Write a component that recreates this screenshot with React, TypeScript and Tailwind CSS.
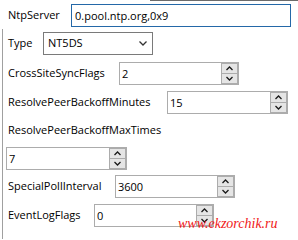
const Chevron = ({ up }: { up?: boolean }) => (
  <svg width="7" height="5" viewBox="0 0 7 5" className="block">
    <polyline
      points={up ? '0.5,4 3.5,1 6.5,4' : '0.5,1 3.5,4 6.5,1'}
      fill="none"
      stroke="#1a1a1a"
      strokeWidth="1.3"
    />
  </svg>
);

const Spinner = () => (
  <div className="flex w-[17px] flex-col gap-px bg-[#acacac] p-px">
    <div className="flex flex-1 items-center justify-center bg-[#e5e5e5]">
      <Chevron up />
    </div>
    <div className="flex flex-1 items-center justify-center bg-[#e5e5e5]">
      <Chevron />
    </div>
  </div>
);

const NumBox = ({ value, width }: { value: string; width: string }) => (
  <div className={`flex h-[23px] border border-[#acacac] bg-white ${width}`}>
    <span className="flex-1 pl-[2px] leading-[21px]">{value}</span>
    <Spinner />
  </div>
);

const App = () => {
  const rows = [
    { label: 'CrossSiteSyncFlags', value: '2', labelW: 'w-[111px]', boxW: 'w-[120px]', mt: 'mt-[7px]' },
    { label: 'ResolvePeerBackoffMinutes', value: '15', labelW: 'w-[159px]', boxW: 'w-[121px]', mt: 'mt-[6px]' },
  ];

  return (
    <div
      className="relative h-[240px] w-[298px] overflow-hidden bg-white text-[11px] text-black"
      style={{ fontFamily: "'Open Sans', 'Noto Sans', sans-serif" }}
    >
      <div className="ml-[150px] h-px bg-[#6b6b6b]" />

      {/* NtpServer */}
      <div className="mt-[3px] flex items-center pl-[8px]">
        <span className="w-[63px]">NtpServer</span>
        <div className="h-[23px] w-[220px] border border-[#2468a8] pl-[3px] leading-[21px]">
          0.pool.ntp.org,0x9
        </div>
      </div>

      {/* bordered group */}
      <div className="ml-[2px] mt-[2px] h-[210px] border-l border-[#a0a0a0] pl-[5px] pt-[3px]">
        <div className="flex items-center">
          <span className="w-[35px]">Type</span>
          <div className="flex h-[23px] w-[110px] items-center justify-between border border-[#7a7a7a] pl-[4px] pr-[5px]">
            <span>NT5DS</span>
            <svg width="8" height="5" viewBox="0 0 8 5">
              <polyline points="0.5,0.5 4,4 7.5,0.5" fill="none" stroke="#333" strokeWidth="1.3" />
            </svg>
          </div>
        </div>

        {rows.map((r) => (
          <div key={r.label} className={`flex items-center ${r.mt}`}>
            <span className={r.labelW}>{r.label}</span>
            <NumBox value={r.value} width={r.boxW} />
          </div>
        ))}

        <div className="mt-[8px] leading-[16px]">ResolvePeerBackoffMaxTimes</div>
        <div className="-ml-[2px] mt-[9px]">
          <NumBox value="7" width="w-[121px]" />
        </div>

        <div className="mt-[5px] flex items-center">
          <span className="w-[107px]">SpecialPollInterval</span>
          <NumBox value="3600" width="w-[120px]" />
        </div>

        <div className="mt-[6px] flex items-center">
          <span className="w-[86px]">EventLogFlags</span>
          <NumBox value="0" width="w-[120px]" />
        </div>
      </div>

      <span
        className="absolute left-[178px] top-[213px] text-[14px] italic text-[#f01818]"
        style={{ fontFamily: "'Liberation Serif', serif" }}
      >
        www.ekzorchik.ru
      </span>
    </div>
  );
};

export default App;
